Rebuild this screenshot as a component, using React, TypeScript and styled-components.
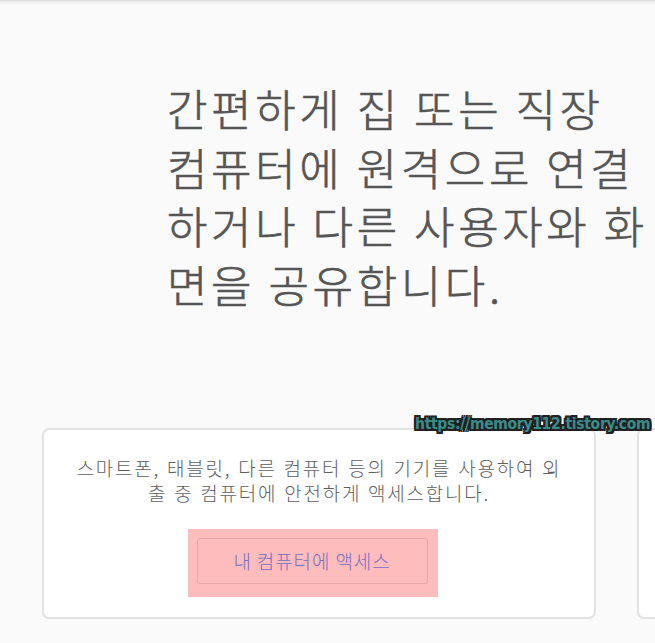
import styled, { createGlobalStyle } from "styled-components";

const GlobalStyle = createGlobalStyle`
  html, body {
    margin: 0;
    padding: 0;
    background: #fafafa;
    overflow: hidden;
  }
  body {
    font-family: "Noto Sans CJK KR", "Noto Sans", sans-serif;
  }
`;

const Page = styled.div`
  position: relative;
  width: 655px;
  height: 643px;
  background: #fafafa;
  overflow: hidden;
`;

const TopShadow = styled.div`
  height: 5px;
  background: linear-gradient(#d6d6d6, #ececec 30%, #fafafa);
`;

const Hero = styled.h1`
  margin: 0;
  padding: 74px 0 0 167px;
  font-size: 44px;
  font-weight: 300;
  line-height: 58.7px;
  letter-spacing: 3.6px;
  color: #555;
  -webkit-text-stroke: 0.6px #555;
  white-space: nowrap;
`;

const CardRow = styled.div`
  display: flex;
  gap: 41px;
  padding: 114px 0 0 42px;
`;

const Card = styled.div`
  flex: 0 0 554px;
  height: 191px;
  box-sizing: border-box;
  background: #fff;
  border: 2px solid #e2e2e2;
  border-radius: 7px;
  padding: 25px 29px 0;
  display: flex;
  flex-direction: column;
  align-items: center;
`;

const CardText = styled.p`
  margin: 0;
  font-size: 19px;
  font-weight: 300;
  line-height: 25.5px;
  letter-spacing: 1.75px;
  word-spacing: 1px;
  color: #5e5e5e;
  text-align: center;
`;

const Highlight = styled.div`
  margin: 23px 13px 0 0;
  padding: 9px 10px 13px 9px;
  background: #ffbcbc;
`;

const AccessButton = styled.button`
  width: 231px;
  height: 46px;
  border: 1px solid #eaa6aa;
  border-radius: 3px;
  background: transparent;
  font-family: "Noto Sans CJK KR", "Noto Sans", sans-serif;
  font-size: 19px;
  font-weight: 300;
  letter-spacing: 0.9px;
  color: #7a6dc6;
  cursor: pointer;
`;

const Watermark = styled.div`
  position: absolute;
  left: 415px;
  top: 415px;
  font-family: "DejaVu Sans Condensed", "DejaVu Sans", sans-serif;
  font-stretch: condensed;
  font-weight: 700;
  font-size: 15.5px;
  letter-spacing: -0.3px;
  color: #3b8b8a;
  text-shadow:
    -2px -2px 0 #1f1f1f, 2px -2px 0 #1f1f1f, -2px 2px 0 #1f1f1f,
    2px 2px 0 #1f1f1f, 0 -2px 0 #1f1f1f, 0 2px 0 #1f1f1f,
    -2px 0 0 #1f1f1f, 2px 0 0 #1f1f1f;
`;

export default function App() {
  return (
    <Page>
      <GlobalStyle />
      <TopShadow />
      <Hero>
        간편하게 집 또는 직장
        <br />
        컴퓨터에 원격으로 연결
        <br />
        하거나 다른 사용자와 화
        <br />
        면을 공유합니다.
      </Hero>
      <CardRow>
        <Card>
          <CardText>
            스마트폰, 태블릿, 다른 컴퓨터 등의 기기를 사용하여 외출 중
            컴퓨터에 안전하게 액세스합니다.
          </CardText>
          <Highlight>
            <AccessButton>내 컴퓨터에 액세스</AccessButton>
          </Highlight>
        </Card>
        <Card />
      </CardRow>
      <Watermark>https://memory112.tistory.com</Watermark>
    </Page>
  );
}
